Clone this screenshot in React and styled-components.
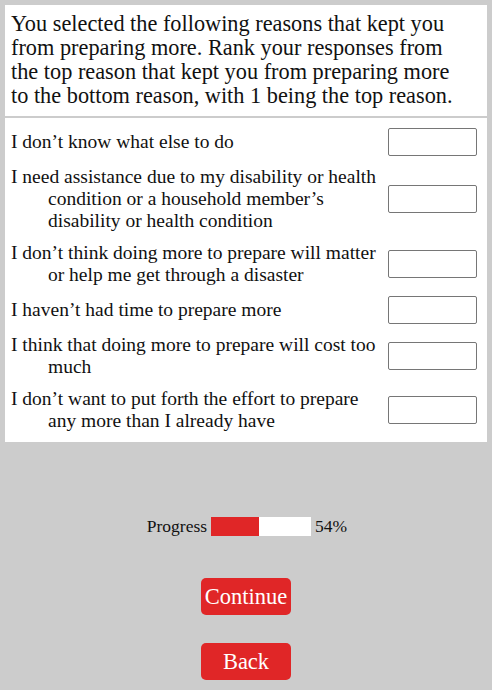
import React from "react";
import styled, { createGlobalStyle } from "styled-components";

const GlobalStyle = createGlobalStyle`
  html, body {
    margin: 0;
    padding: 0;
    background: #cccccc;
  }
  body {
    font-family: "Liberation Serif", "Times New Roman", serif;
    color: #111111;
  }
`;

const Page = styled.div`
  display: flex;
  flex-direction: column;
  padding: 5px;
  gap: 2px;
`;

const Panel = styled.div`
  background: #ffffff;
`;

const Prompt = styled(Panel)`
  padding: 7px 19px 8px 6px;
  font-size: 22.3px;
  line-height: 24px;
`;

const List = styled(Panel)`
  display: flex;
  flex-direction: column;
  gap: 10px;
  padding: 10px 10px 10px 6px;
`;

const Row = styled.div`
  display: flex;
  align-items: center;
  gap: 4px;
`;

const Label = styled.label`
  flex: 1;
  font-size: 19.5px;
  line-height: 22px;
  padding-left: 37px;
  text-indent: -37px;
`;

const RankInput = styled.input`
  box-sizing: border-box;
  width: 89px;
  height: 28px;
  flex-shrink: 0;
  border: 1px solid #767676;
  border-radius: 2px;
  background: #ffffff;
  margin: 0;
`;

const Footer = styled.div`
  display: flex;
  flex-direction: column;
  align-items: center;
  padding-top: 70px;
`;

const ProgressRow = styled.div`
  display: flex;
  align-items: center;
  gap: 4px;
  font-size: 17.5px;
  line-height: 19px;
  margin-left: 2px;
`;

const Track = styled.div`
  width: 100px;
  height: 19px;
  background: #ffffff;
  display: flex;
`;

const Fill = styled.div`
  height: 100%;
  background: #e02627;
`;

const Button = styled.button`
  box-sizing: border-box;
  width: 90px;
  height: 37px;
  margin-top: ${(p) => p.$gap}px;
  padding: 0;
  border: none;
  border-radius: 5px;
  background: #e02627;
  color: #ffffff;
  font-family: "Liberation Serif", "Times New Roman", serif;
  font-size: 22.5px;
  cursor: pointer;
`;

const reasons = [
  "I don\u2019t know what else to do",
  "I need assistance due to my disability or health condition or a household member\u2019s disability or health condition",
  "I don\u2019t think doing more to prepare will matter or help me get through a disaster",
  "I haven\u2019t had time to prepare more",
  "I think that doing more to prepare will cost too much",
  "I don\u2019t want to put forth the effort to prepare any more than I already have",
];

export default function App() {
  const progress = 54;
  return (
    <>
      <GlobalStyle />
      <Page>
        <Prompt>
          You selected the following reasons that kept you from preparing
          more. Rank your responses from the top reason that kept you from
          preparing more to the bottom reason, with 1 being the top reason.
        </Prompt>
        <List>
          {reasons.map((r, i) => (
            <Row key={i}>
              <Label htmlFor={`rank-${i}`}>{r}</Label>
              <RankInput id={`rank-${i}`} type="text" />
            </Row>
          ))}
        </List>
      </Page>
      <Footer>
        <ProgressRow>
          <span>Progress</span>
          <Track>
            <Fill style={{ width: `${progress * 0.89}%` }} />
          </Track>
          <span>{progress}%</span>
        </ProgressRow>
        <Button $gap={42}>Continue</Button>
        <Button $gap={28}>Back</Button>
      </Footer>
    </>
  );
}
